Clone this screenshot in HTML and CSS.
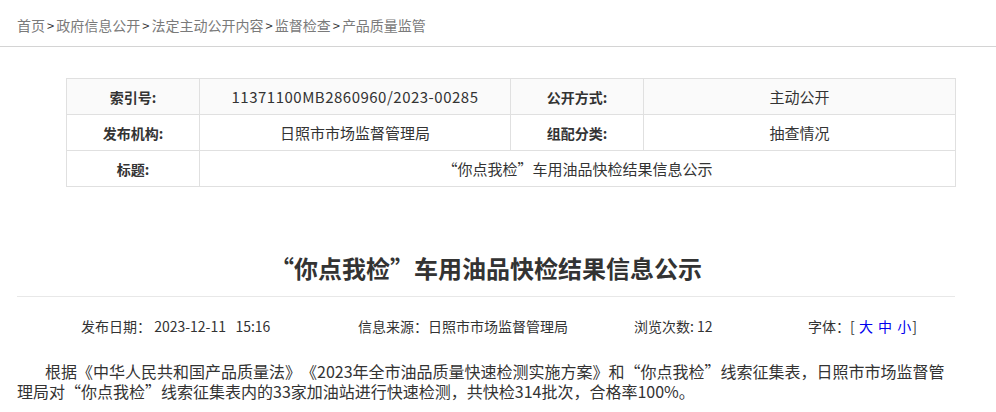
FILE: index.html
```html
<!DOCTYPE html>
<html lang="zh-CN">
<head>
<meta charset="utf-8">
<title>“你点我检”车用油品快检结果信息公示</title>
<link rel="stylesheet" href="styles.css">
</head>
<body>
<div class="crumbs">
  <div class="crumbs-inner">
    <a class="crumb" href="#">首页</a><span class="sep">&gt;</span><a class="crumb" href="#">政府信息公开</a><span class="sep">&gt;</span><a class="crumb" href="#">法定主动公开内容</a><span class="sep">&gt;</span><a class="crumb" href="#">监督检查</a><span class="sep">&gt;</span><a class="crumb" href="#">产品质量监管</a>
  </div>
</div>
<div class="page">
  <table class="info">
    <colgroup>
      <col class="c-label"><col class="c-value"><col class="c-label"><col class="c-value2">
    </colgroup>
    <tr class="row-first">
      <th>索引号:</th><td><span class="num">11371100MB2860960/2023-00285</span></td>
      <th>公开方式:</th><td>主动公开</td>
    </tr>
    <tr>
      <th>发布机构:</th><td>日照市市场监督管理局</td>
      <th>组配分类:</th><td>抽查情况</td>
    </tr>
    <tr>
      <th>标题:</th><td colspan="3">“你点我检”车用油品快检结果信息公示</td>
    </tr>
  </table>

  <h1 class="title">“你点我检”车用油品快检结果信息公示</h1>

  <div class="meta">
    <span>发布日期：&nbsp;2023-12-11&nbsp;&nbsp;&nbsp;15:16</span>
    <span>信息来源：日照市市场监督管理局</span>
    <span>浏览次数: 12</span>
    <span>字体：[ <a class="fs" href="#">大</a> <a class="fs" href="#">中</a> <a class="fs" href="#">小</a>]</span>
  </div>

  <p class="content">根据《中华人民共和国产品质量法》《2023年全市油品质量快速检测实施方案》和“你点我检”线索征集表，日照市市场监督管理局对“你点我检”线索征集表内的33家加油站进行快速检测，共快检314批次，合格率100%。</p>
</div>
</body>
</html>
```
FILE: styles.css
```css
html, body {
  margin: 0;
  padding: 0;
  background: #fff;
}
body {
  font-family: "Noto Sans CJK SC", "Noto Sans", sans-serif;
  color: #333;
  font-size: 14px;
  text-spacing-trim: space-all;
}
.crumbs {
  height: 46px;
  border-bottom: 1px solid #d4d4d4;
}
.crumbs-inner {
  padding: 15px 0 0 17px;
  line-height: 20px;
  font-size: 14px;
}
.crumb {
  color: #7a7a7a;
  text-decoration: none;
}
.sep {
  color: #333;
  margin: 0 2px;
  font-size: 13px;
}
.page {
  width: 938px;
  padding-left: 17px;
}
.info {
  margin: 31px 0 0 49px;
  width: 889px;
  border-collapse: collapse;
  table-layout: fixed;
}
.c-label { width: 133px; }
.c-value { width: 311px; }
.c-value2 { width: 312px; }
.info th, .info td {
  border: 1px solid #e0e0e0;
  height: 35px;
  padding: 0;
  text-align: center;
  vertical-align: middle;
  line-height: 20px;
}
.info th {
  font-weight: bold;
  font-size: 14px;
  color: #333;
}
.info td {
  font-size: 15px;
  color: #333;
}
.num {
  letter-spacing: 0.5px;
}
.row-first th, .row-first td {
  background: #fafafa;
}
.title {
  margin: 61px 0 0 0;
  padding-bottom: 8px;
  border-bottom: 1px solid #e8e8e8;
  text-align: center;
  font-size: 24px;
  line-height: 40px;
  font-weight: bold;
  color: #333;
}
.meta {
  display: grid;
  grid-template-columns: 277px 276px 174px auto;
  padding-left: 64px;
  margin-top: 19px;
  font-size: 14px;
  line-height: 20px;
  color: #333;
}
.fs {
  color: #0000ee;
  text-decoration: none;
  margin: 0 1px;
}
.content {
  margin: 25px 0 0 0;
  font-size: 16px;
  line-height: 20px;
  text-indent: 28px;
  color: #333;
}
```
